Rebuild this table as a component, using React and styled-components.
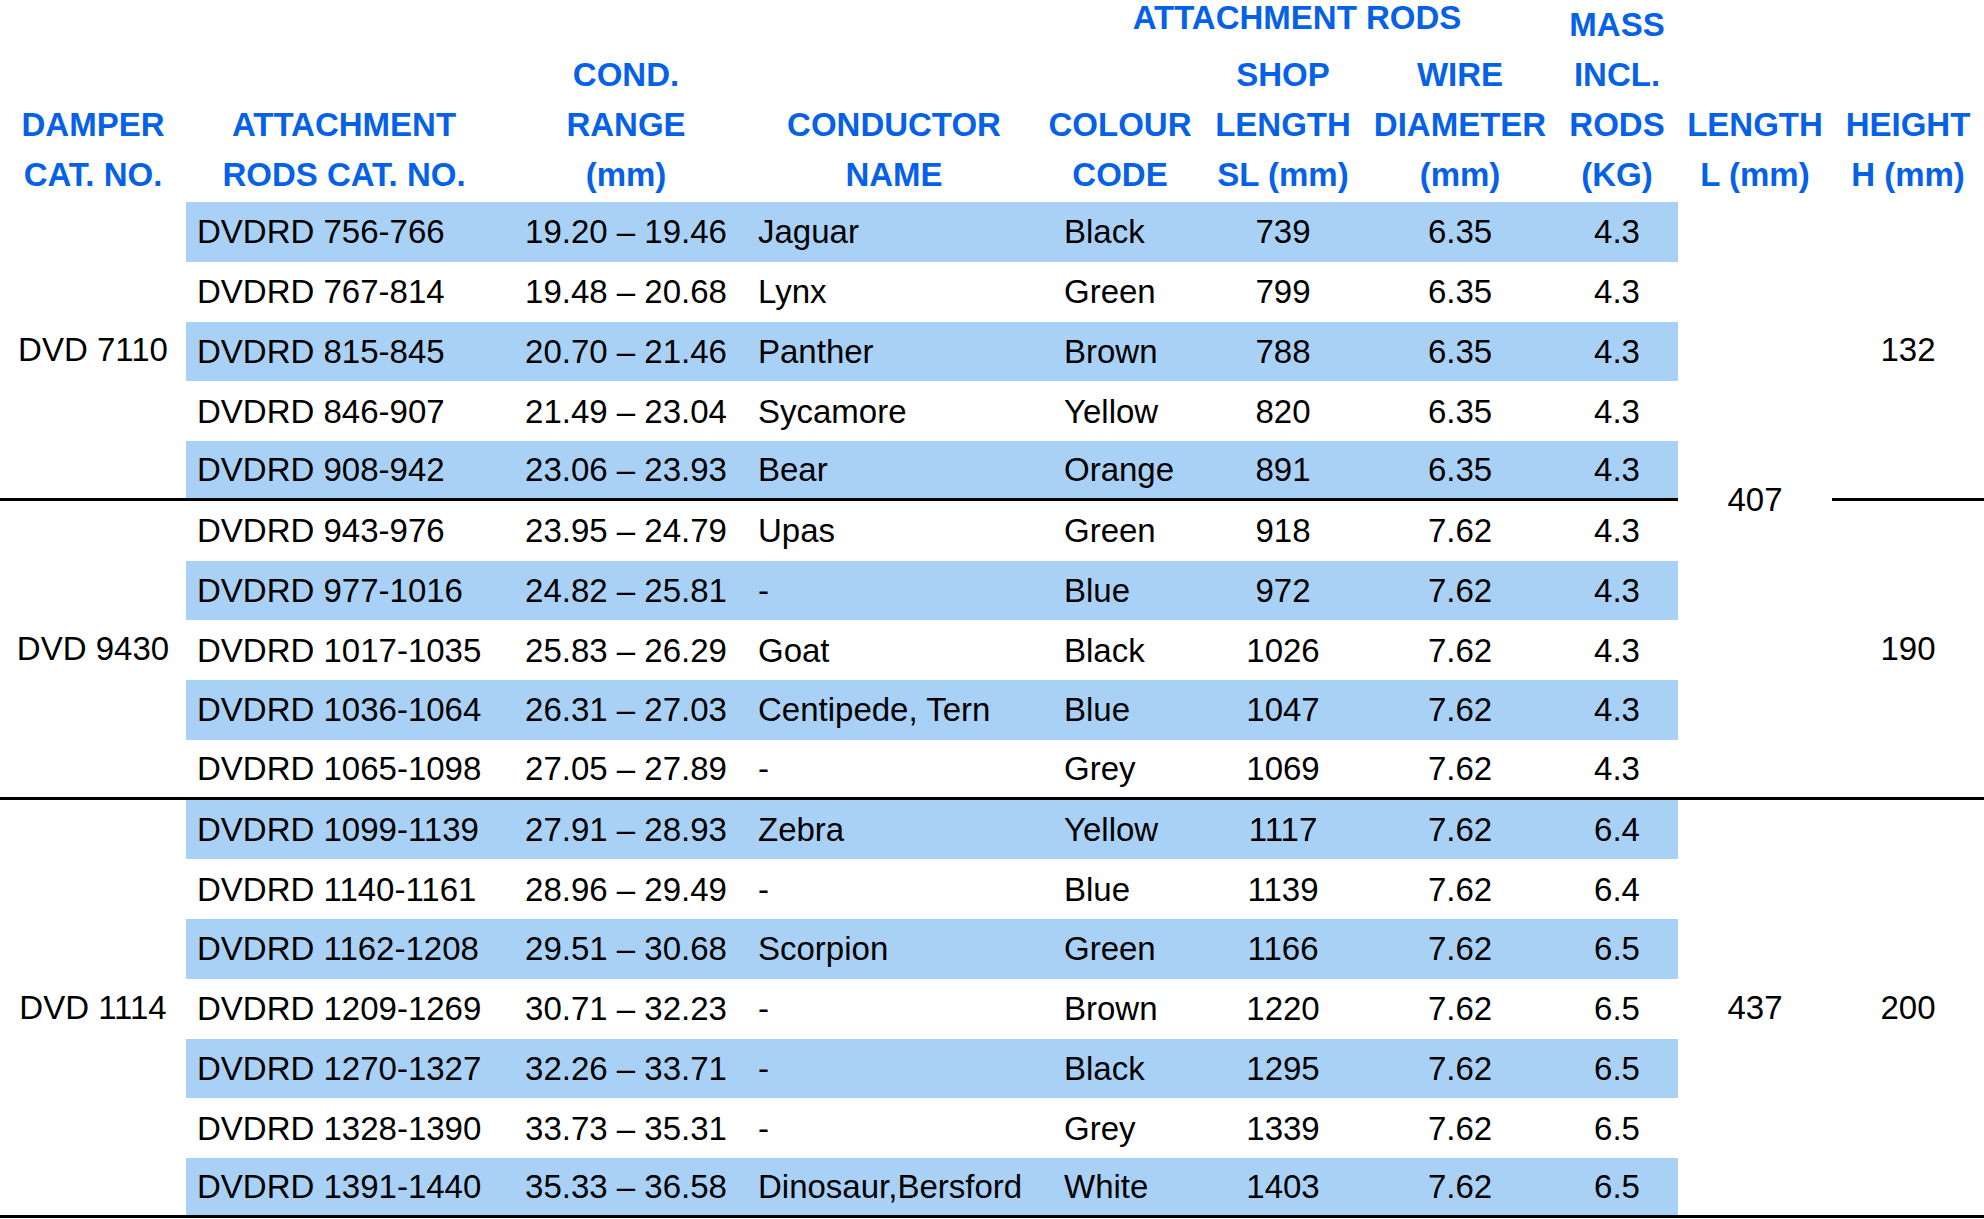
import React from 'react';
import styled, { createGlobalStyle } from 'styled-components';

const BLUE = '#0661e9';
const SHADE = '#a9d1f6';

const GlobalStyle = createGlobalStyle`
  html, body {
    margin: 0;
    padding: 0;
    background: #fff;
    overflow: hidden;
  }
`;

const Table = styled.table`
  width: 1984px;
  table-layout: fixed;
  border-collapse: separate;
  border-spacing: 0;
  font-family: "Liberation Sans", Arial, sans-serif;
  font-size: 33px;
  color: #000;
`;

const HeadRow = styled.tr`
  height: ${(p) => p.$h}px;
`;

const HeadCell = styled.th`
  padding: 0 0 2px;
  font-weight: bold;
  color: ${BLUE};
  line-height: 50px;
  text-align: center;
  vertical-align: bottom;
  white-space: nowrap;
`;

const GroupHead = styled(HeadCell)`
  padding: 0;
  line-height: 36px;
  vertical-align: top;
`;

const Row = styled.tr`
  height: 59.75px;
`;

const Cell = styled.td`
  padding: 0 0 0 ${(p) => p.$indent || 0}px;
  text-align: ${(p) => (p.$indent ? 'left' : 'center')};
  background: ${(p) => (p.$shaded ? SHADE : 'transparent')};
  border-bottom: ${(p) => (p.$rule ? '3px solid #000' : '0')};
  vertical-align: middle;
  white-space: nowrap;
  line-height: 1;
`;

const widths = [186, 316, 248, 288, 164, 162, 192, 122, 154, 152];
// left-aligned body columns and their text indent
const indents = [11, 0, 8, 26, 0, 0, 0];

const groups = [
  {
    damper: 'DVD 7110',
    height: '132',
    rows: [
      ['DVDRD 756-766', '19.20 – 19.46', 'Jaguar', 'Black', '739', '6.35', '4.3'],
      ['DVDRD 767-814', '19.48 – 20.68', 'Lynx', 'Green', '799', '6.35', '4.3'],
      ['DVDRD 815-845', '20.70 – 21.46', 'Panther', 'Brown', '788', '6.35', '4.3'],
      ['DVDRD 846-907', '21.49 – 23.04', 'Sycamore', 'Yellow', '820', '6.35', '4.3'],
      ['DVDRD 908-942', '23.06 – 23.93', 'Bear', 'Orange', '891', '6.35', '4.3'],
    ],
  },
  {
    damper: 'DVD 9430',
    height: '190',
    rows: [
      ['DVDRD 943-976', '23.95 – 24.79', 'Upas', 'Green', '918', '7.62', '4.3'],
      ['DVDRD 977-1016', '24.82 – 25.81', '-', 'Blue', '972', '7.62', '4.3'],
      ['DVDRD 1017-1035', '25.83 – 26.29', 'Goat', 'Black', '1026', '7.62', '4.3'],
      ['DVDRD 1036-1064', '26.31 – 27.03', 'Centipede, Tern', 'Blue', '1047', '7.62', '4.3'],
      ['DVDRD 1065-1098', '27.05 – 27.89', '-', 'Grey', '1069', '7.62', '4.3'],
    ],
  },
  {
    damper: 'DVD 1114',
    height: '200',
    rows: [
      ['DVDRD 1099-1139', '27.91 – 28.93', 'Zebra', 'Yellow', '1117', '7.62', '6.4'],
      ['DVDRD 1140-1161', '28.96 – 29.49', '-', 'Blue', '1139', '7.62', '6.4'],
      ['DVDRD 1162-1208', '29.51 – 30.68', 'Scorpion', 'Green', '1166', '7.62', '6.5'],
      ['DVDRD 1209-1269', '30.71 – 32.23', '-', 'Brown', '1220', '7.62', '6.5'],
      ['DVDRD 1270-1327', '32.26 – 33.71', '-', 'Black', '1295', '7.62', '6.5'],
      ['DVDRD 1328-1390', '33.73 – 35.31', '-', 'Grey', '1339', '7.62', '6.5'],
      ['DVDRD 1391-1440', '35.33 – 36.58', 'Dinosaur,Bersford', 'White', '1403', '7.62', '6.5'],
    ],
  },
];

// damper length is shared: first value covers the first two groups
const lengths = { 0: ['407', 10], 10: ['437', 7] };

function Lines({ children }) {
  return children.split('|').map((l, i) => (
    <React.Fragment key={i}>
      {i > 0 && <br />}
      {l}
    </React.Fragment>
  ));
}

function Header() {
  return (
    <thead>
      <HeadRow $h={50}>
        <HeadCell rowSpan={2}><Lines>DAMPER|CAT. NO.</Lines></HeadCell>
        <HeadCell rowSpan={2}><Lines>ATTACHMENT|RODS CAT. NO.</Lines></HeadCell>
        <HeadCell rowSpan={2}><Lines>COND.|RANGE|(mm)</Lines></HeadCell>
        <HeadCell rowSpan={2}><Lines>CONDUCTOR|NAME</Lines></HeadCell>
        <GroupHead colSpan={3}>ATTACHMENT RODS</GroupHead>
        <HeadCell rowSpan={2}><Lines>MASS|INCL.|RODS|(KG)</Lines></HeadCell>
        <HeadCell rowSpan={2}><Lines>LENGTH|L (mm)</Lines></HeadCell>
        <HeadCell rowSpan={2}><Lines>HEIGHT|H (mm)</Lines></HeadCell>
      </HeadRow>
      <HeadRow $h={152}>
        <HeadCell><Lines>COLOUR|CODE</Lines></HeadCell>
        <HeadCell><Lines>SHOP|LENGTH|SL (mm)</Lines></HeadCell>
        <HeadCell><Lines>WIRE|DIAMETER|(mm)</Lines></HeadCell>
      </HeadRow>
    </thead>
  );
}

export default function App() {
  let index = 0;
  const body = [];

  groups.forEach((g) => {
    g.rows.forEach((r, ri) => {
      const n = index++;
      const first = ri === 0;
      const last = ri === g.rows.length - 1;
      const len = lengths[n];
      body.push(
        <Row key={n}>
          {first && (
            <Cell rowSpan={g.rows.length} $rule>
              {g.damper}
            </Cell>
          )}
          {r.map((v, ci) => (
            <Cell key={ci} $indent={indents[ci]} $shaded={n % 2 === 0} $rule={last}>
              {v}
            </Cell>
          ))}
          {len && (
            <Cell rowSpan={len[1]} $rule>
              {len[0]}
            </Cell>
          )}
          {first && (
            <Cell rowSpan={g.rows.length} $rule>
              {g.height}
            </Cell>
          )}
        </Row>
      );
    });
  });

  return (
    <>
      <GlobalStyle />
      <Table>
        <colgroup>
          {widths.map((w, i) => (
            <col key={i} style={{ width: w }} />
          ))}
        </colgroup>
        <Header />
        <tbody>{body}</tbody>
      </Table>
    </>
  );
}
